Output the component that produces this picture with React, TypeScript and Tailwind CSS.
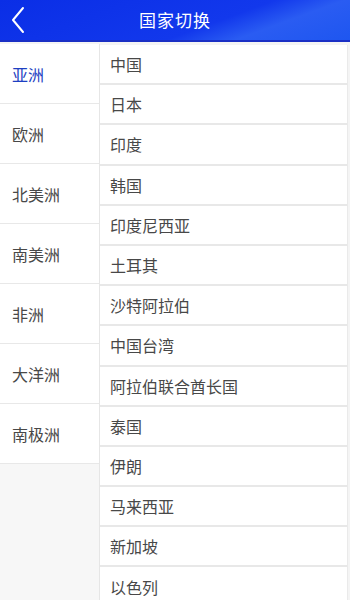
import { useState } from 'react'

const continents = ['亚洲', '欧洲', '北美洲', '南美洲', '非洲', '大洋洲', '南极洲']

const countries = [
  '中国',
  '日本',
  '印度',
  '韩国',
  '印度尼西亚',
  '土耳其',
  '沙特阿拉伯',
  '中国台湾',
  '阿拉伯联合酋长国',
  '泰国',
  '伊朗',
  '马来西亚',
  '新加坡',
  '以色列',
]

export default function App() {
  const [active, setActive] = useState(0)

  return (
    <div
      className="w-[350px] h-[600px] overflow-hidden bg-[#f4f4f4] flex flex-col"
      style={{ fontFamily: '"Noto Sans CJK SC", "Noto Sans", sans-serif' }}
    >
      <div className="relative h-[42px] shrink-0 flex items-center justify-center bg-[linear-gradient(160deg,#0a2ee6_0%,#1238ec_60%,#2a5cf2_75%,#1e56f0_100%)] border-b-2 border-[#1a2fc4]">
        <button className="absolute left-[8px] top-[6px] w-[20px] h-[28px] flex items-center justify-center">
          <svg width="16" height="28" viewBox="0 0 16 28" fill="none">
            <path d="M13 2 L3 14 L13 26" stroke="white" strokeWidth="2" strokeLinecap="round" strokeLinejoin="round" />
          </svg>
        </button>
        <span className="text-white text-[17px] tracking-[1px]">国家切换</span>
      </div>

      <div className="flex flex-1 min-h-0 pt-[2px]">
        <div className="w-[100px] shrink-0 flex flex-col bg-[#f7f7f7] border-r border-[#e6e6e6]">
          {continents.map((c, i) => (
            <div
              key={c}
              onClick={() => setActive(i)}
              className="h-[60px] shrink-0 flex items-center pl-[12px] bg-white border-b border-[#e8e8e8]"
            >
              <span className={`text-[16px] ${i === active ? 'text-[#1d3fc2]' : 'text-[#484848]'}`}>{c}</span>
            </div>
          ))}
        </div>

        <div className="flex-1 flex flex-col pr-[2px] pt-[1px]">
          {countries.map((c) => (
            <div
              key={c}
              className="h-[40.2px] shrink-0 flex items-center pl-[10px] bg-white border-b-2 border-[#e8e8e8] border-r border-r-[#eaeaea]"
            >
              <span className="text-[16px] text-[#484848]">{c}</span>
            </div>
          ))}
        </div>
      </div>
    </div>
  )
}
